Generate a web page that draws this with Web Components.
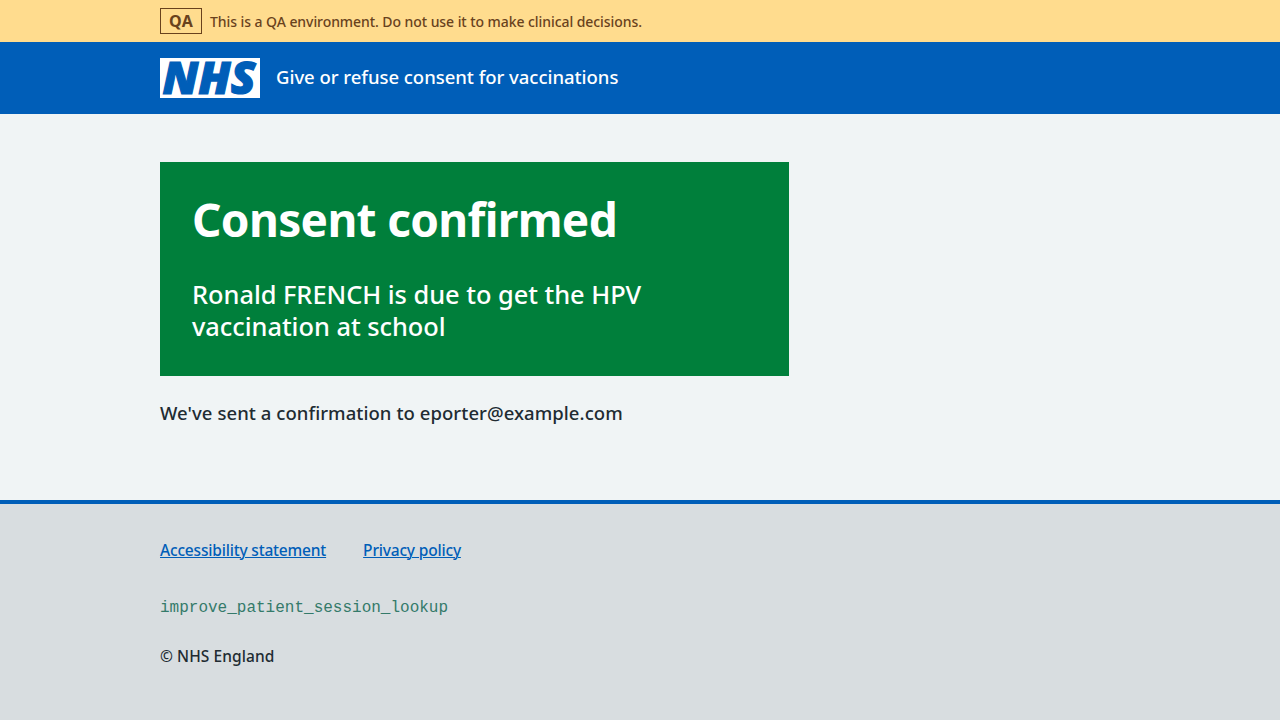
<!DOCTYPE html>
<html lang="en">
<head>
<meta charset="utf-8">
<title>Consent confirmed</title>
<style>
  html, body { margin: 0; height: 100%; }
  body {
    background: #f0f4f5;
    color: #212b32;
    font: 500 18.5px/28px "Noto Sans", "Open Sans", sans-serif;
  }
</style>
</head>
<body>
<consent-page></consent-page>

<script>
const define = (name, html) => {
  const template = document.createElement('template');
  template.innerHTML = html;
  customElements.define(name, class extends HTMLElement {
    constructor() {
      super();
      this.attachShadow({ mode: 'open' }).append(template.content.cloneNode(true));
    }
  });
};

define('page-container', `
  <style>
    :host { display: block; width: 960px; margin: 0 auto; }
  </style>
  <slot></slot>`);

define('environment-banner', `
  <style>
    :host { display: block; background: #ffdc8e; color: #69421d; padding: 8px 0; }
    div { display: flex; align-items: center; gap: 8px; height: 26px; }
    strong {
      box-sizing: border-box; width: 42px; height: 26px; border: 1px solid currentColor;
      text-align: center; font-size: 16px; line-height: 25px; font-weight: 700; letter-spacing: .2px;
    }
    strong ::slotted(b) { font-weight: 700; }
    span { padding-top: 2px; font-size: 14px; line-height: 26px; letter-spacing: -.066px; }
  </style>
  <page-container><div><strong><slot name="tag"></slot></strong><span><slot></slot></span></div></page-container>`);

define('nhs-logo', `
  <style>
    :host { display: block; width: 100px; height: 40px; }
    svg { display: block; overflow: visible; }
    text { font: italic 800 44.5px "Open Sans", "Noto Sans", sans-serif; }
  </style>
  <svg width="100" height="40" viewBox="0 0 100 40" role="img" aria-label="NHS">
    <rect width="100" height="40" fill="#fff"/>
    <text x="2.5" y="36" textLength="93" lengthAdjust="spacingAndGlyphs" fill="#005eb8" stroke="#005eb8" stroke-width="1.2">NHS</text>
  </svg>`);

define('service-header', `
  <style>
    :host { display: block; background: #005eb8; color: #fff; padding: 16px 0; }
    div { display: flex; align-items: center; gap: 16px; height: 40px; }
    span { padding-bottom: 3px; letter-spacing: -.03px; }
  </style>
  <page-container><div><nhs-logo></nhs-logo><span><slot></slot></span></div></page-container>`);

define('confirmation-panel', `
  <style>
    :host { display: block; box-sizing: border-box; width: 629px; padding: 30px 32px 34px; background: #007f3b; color: #fff; }
    h1 { margin: 0 0 32px; font-size: 46px; line-height: 54px; font-weight: 700; letter-spacing: -.67px; }
    p { margin: 0; width: 500px; font-size: 25.4px; line-height: 32px; letter-spacing: -.03px; }
  </style>
  <h1><slot name="heading"></slot></h1>
  <p><slot></slot></p>`);

define('footer-link', `
  <style>
    :host { display: block; letter-spacing: -.18px; }
    a { color: #005eb8; text-decoration: underline; text-decoration-thickness: 1px; text-underline-offset: 1px; }
  </style>
  <a href="#"><slot></slot></a>`);

define('site-footer', `
  <style>
    :host {
      display: block; flex: 1; box-sizing: border-box; padding-top: 34px;
      border-top: 4px solid #005eb8; background: #d8dde0; font-size: 15.5px; line-height: 24px;
    }
    nav { display: flex; gap: 37px; margin-bottom: 34px; }
    code { display: block; margin-bottom: 24px; color: #347a6a; font: 400 16px/24px "Liberation Mono", monospace; }
    p { margin: 0; letter-spacing: .08px; }
  </style>
  <page-container>
    <nav><slot name="links"></slot></nav>
    <code><slot name="version"></slot></code>
    <p><slot></slot></p>
  </page-container>`);

define('consent-page', `
  <style>
    :host { display: flex; flex-direction: column; height: 100vh; overflow: hidden; }
    main { box-sizing: border-box; height: 386px; padding-top: 48px; }
    p { margin: 23px 0 0; letter-spacing: .06px; }
  </style>
  <environment-banner><b slot="tag">QA</b>This is a QA environment. Do not use it to make clinical decisions.</environment-banner>
  <service-header>Give or refuse consent for vaccinations</service-header>
  <main>
    <page-container>
      <confirmation-panel>
        <span slot="heading">Consent confirmed</span>
        Ronald FRENCH is due to get the HPV vaccination at school
      </confirmation-panel>
      <p>We've sent a confirmation to eporter@example.com</p>
    </page-container>
  </main>
  <site-footer>
    <footer-link slot="links">Accessibility statement</footer-link>
    <footer-link slot="links">Privacy policy</footer-link>
    <span slot="version">improve_patient_session_lookup</span>
    © NHS England
  </site-footer>`);
</script>
</body>
</html>
